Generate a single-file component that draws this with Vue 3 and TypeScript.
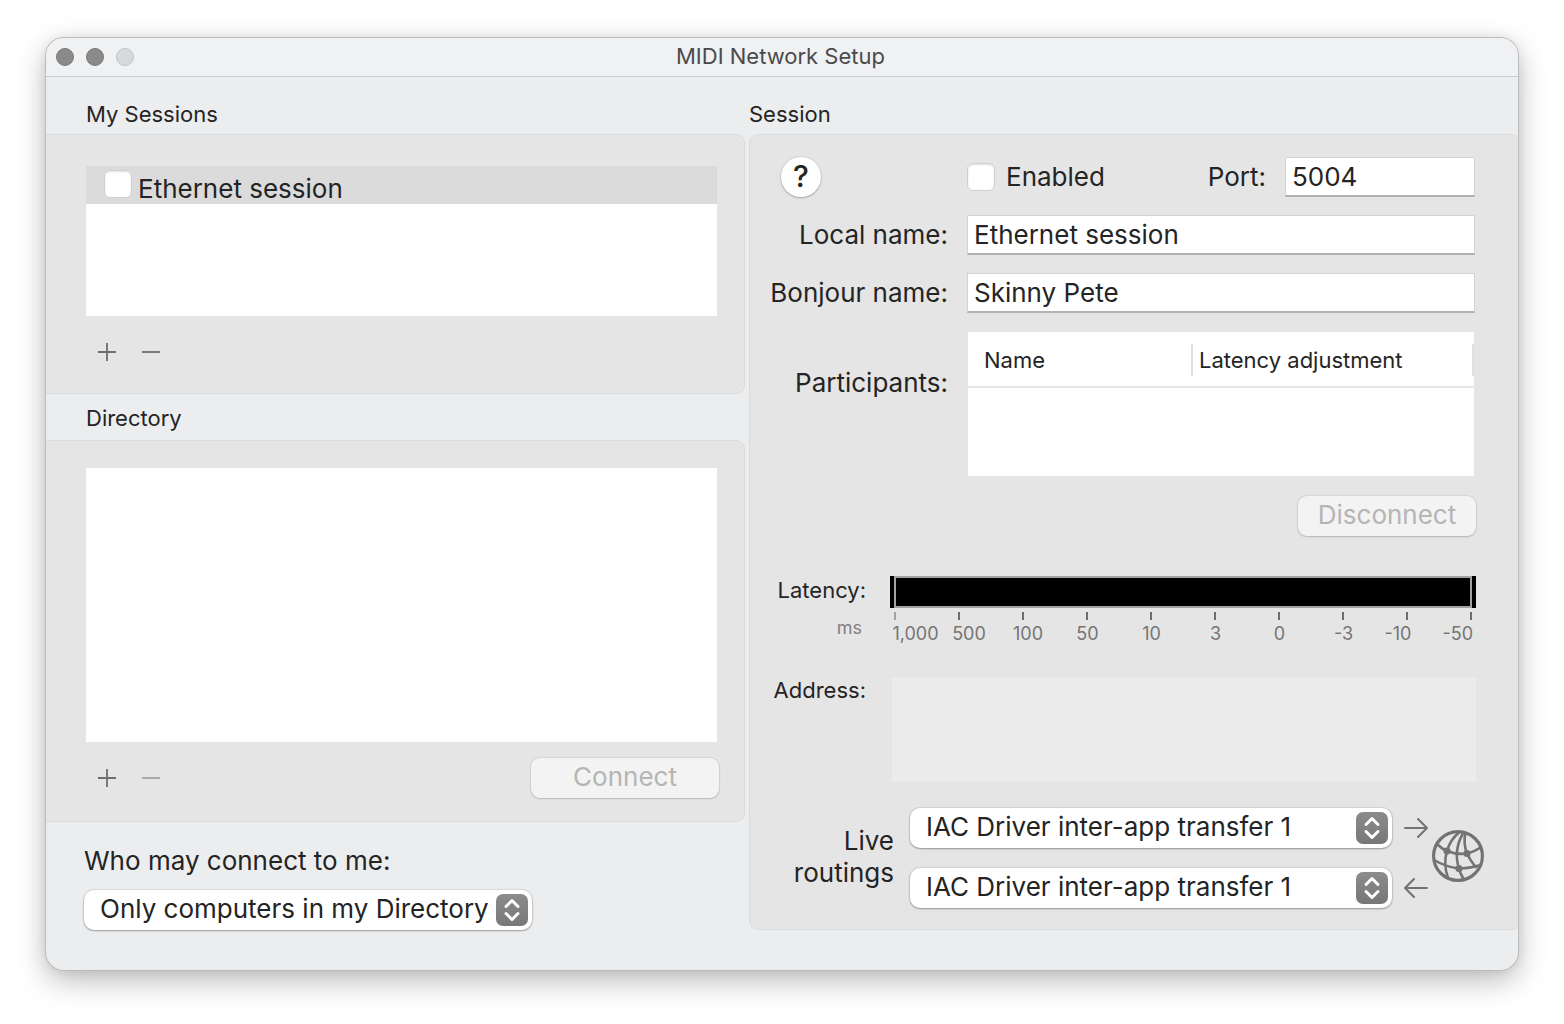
<script setup lang="ts">
import { ref } from 'vue'

interface Session {
  id: number
  name: string
  enabled: boolean
}

const sessions = ref<Session[]>([{ id: 1, name: 'Ethernet session', enabled: false }])
const enabled = ref(false)
const port = ref('5004')
const localName = ref('Ethernet session')
const bonjourName = ref('Skinny Pete')
const access = ref('Only computers in my Directory')
const driver = 'IAC Driver inter-app transfer 1'
const routeOut = ref(driver)
const routeIn = ref(driver)
const scale: string[] = ['1,000', '500', '100', '50', '10', '3', '0', '-3', '-10', '-50']
</script>

<template>
  <div class="desktop">
    <main class="window">
      <header class="titlebar">
        <div class="lights">
          <button class="light" type="button" aria-label="Close"></button>
          <button class="light" type="button" aria-label="Minimize"></button>
          <button class="light off" type="button" aria-label="Zoom" disabled></button>
        </div>
        <h1>MIDI Network Setup</h1>
      </header>

      <div class="body">
        <div class="column">
          <h2 class="first">My Sessions</h2>
          <section class="panel left sessions">
            <ul class="list">
              <li v-for="s in sessions" :key="s.id">
                <label><input v-model="s.enabled" type="checkbox" class="check" /><span>{{ s.name }}</span></label>
              </li>
            </ul>
            <div class="tools">
              <button class="tool" type="button" aria-label="Add session">
                <svg viewBox="0 0 20 20"><path d="M1 10H19M10 1V19" /></svg>
              </button>
              <button class="tool" type="button" aria-label="Remove session">
                <svg viewBox="0 0 20 20"><path d="M1 10H19" /></svg>
              </button>
            </div>
          </section>

          <h2>Directory</h2>
          <section class="panel left directory">
            <ul class="list"></ul>
            <div class="tools">
              <button class="tool" type="button" aria-label="Add computer">
                <svg viewBox="0 0 20 20"><path d="M1 10H19M10 1V19" /></svg>
              </button>
              <button class="tool" type="button" aria-label="Remove computer" disabled>
                <svg viewBox="0 0 20 20"><path d="M1 10H19" /></svg>
              </button>
              <button class="push connect" type="button" disabled>Connect</button>
            </div>
          </section>

          <div class="access">
            <label for="access">Who may connect to me:</label>
            <span class="popup">
              <select id="access" v-model="access">
                <option>Only computers in my Directory</option>
              </select>
              <svg class="knob" viewBox="0 0 32 32"><path d="M10 12.500L16 6.500L22 12.500M10 19.500L16 25.500L22 19.500" /></svg>
            </span>
          </div>
        </div>

        <div class="column">
          <h2 class="first session-title">Session</h2>
          <section class="panel right">
            <div class="row">
              <div class="caption help-cell">
                <button class="help" type="button" aria-label="Help">?</button>
              </div>
              <div class="field split">
                <label class="enable"><input v-model="enabled" type="checkbox" class="check" /><span>Enabled</span></label>
                <label for="port" class="port-label">Port:</label>
                <input id="port" v-model="port" class="text port" type="text" />
              </div>
            </div>
            <div class="row">
              <label class="caption" for="local">Local name:</label>
              <input id="local" v-model="localName" class="text field" type="text" />
            </div>
            <div class="row">
              <label class="caption" for="bonjour">Bonjour name:</label>
              <input id="bonjour" v-model="bonjourName" class="text field" type="text" />
            </div>
            <div class="row top">
              <span id="participants" class="caption participants">Participants:</span>
              <div class="field table-box">
                <table aria-labelledby="participants">
                  <thead>
                    <tr>
                      <th><span>Name</span></th>
                      <th><span>Latency adjustment</span></th>
                    </tr>
                  </thead>
                </table>
              </div>
            </div>
            <button class="push disconnect" type="button" disabled>Disconnect</button>

            <div class="meter-row">
              <div class="meter-captions">
                <span>Latency:</span>
                <small>ms</small>
              </div>
              <div class="meter">
                <div class="bar"><div></div></div>
                <div class="ticks"><i v-for="n in scale" :key="n"></i></div>
                <div class="scale"><span v-for="n in scale" :key="n">{{ n }}</span></div>
              </div>
            </div>

            <div class="meter-row address">
              <label class="meter-captions" for="address">Address:</label>
              <output id="address"></output>
            </div>

            <div class="routing">
              <span class="routing-label">Live routings</span>
              <div class="routes">
                <div class="route">
                  <span class="popup">
                    <select v-model="routeOut" aria-label="Live routing to network">
                      <option>{{ driver }}</option>
                    </select>
                    <svg class="knob" viewBox="0 0 32 32"><path d="M10 12.500L16 6.500L22 12.500M10 19.500L16 25.500L22 19.500" /></svg>
                  </span>
                  <svg class="arrow" viewBox="0 0 24 20"><path d="M1 10H23M14 1L23 10L14 19" /></svg>
                </div>
                <div class="route">
                  <span class="popup">
                    <select v-model="routeIn" aria-label="Live routing from network">
                      <option>{{ driver }}</option>
                    </select>
                    <svg class="knob" viewBox="0 0 32 32"><path d="M10 12.500L16 6.500L22 12.500M10 19.500L16 25.500L22 19.500" /></svg>
                  </span>
                  <svg class="arrow" viewBox="0 0 24 20"><path d="M23 10H1M10 1L1 10L10 19" /></svg>
                </div>
              </div>
              <svg class="globe" viewBox="0 0 52 52">
                <g fill="none" stroke="#737373" stroke-width="2.600">
                  <circle cx="26" cy="26" r="24.400" stroke-width="3.200" />
                  <path d="M5.500 14.500Q10 19 15 21Q25 25 35 23.500Q42 22 48.500 17.500" />
                  <path d="M2 30Q14 37 27 38.500Q40 38 48.500 35" />
                  <path d="M27 2.500Q18 10 15 21Q11 34 16 48" />
                  <path d="M31.500 2.500Q21 20 27 38.500Q28 43 31.500 49" />
                  <path d="M33.500 2.500Q31 13 35 23.500Q38 30 44.500 38" />
                </g>
                <g fill="#737373">
                  <circle cx="15" cy="21" r="3.600" />
                  <circle cx="35" cy="23.500" r="3.600" />
                  <circle cx="27" cy="38.500" r="3.600" />
                </g>
              </svg>
            </div>
          </section>
        </div>
      </div>
    </main>
  </div>
</template>

<style>
body {
  background: #fff;
}
</style>

<style scoped>
* {
  box-sizing: border-box;
}
.desktop {
  padding: 38px 46px 54px;
  font-family: Inter, "Liberation Sans", sans-serif;
  font-size: 26px;
  line-height: 32px;
  color: #242424;
}
button,
input,
select {
  font: inherit;
  color: inherit;
  margin: 0;
  padding: 0;
  border: 0;
}
.window {
  border-radius: 18px;
  background: #ecedef;
  overflow: hidden;
  box-shadow: 0 0 0 1px #bcbcbc, 0 10px 30px rgba(0, 0, 0, 0.28), 0 0 12px rgba(0, 0, 0, 0.08);
}
.titlebar {
  display: grid;
  grid-template-columns: 1fr auto 1fr;
  align-items: center;
  height: 39px;
  background: #f0f1f3;
  border-bottom: 1px solid #c8c9cb;
}
.lights {
  display: flex;
  gap: 12px;
  padding-left: 10px;
}
.light {
  width: 18px;
  height: 18px;
  border-radius: 50%;
  background: #8a8a8b;
  border: 1px solid #79797a;
}
.light.off {
  background: #d8d9da;
  border-color: #c1c2c3;
}
h1,
h2 {
  margin: 0;
  font-weight: 400;
  font-size: 22px;
  line-height: 26px;
}
h1 {
  padding: 0 3px 2px 0;
  color: #4a4a4b;
}
.body {
  display: grid;
  grid-template-columns: 699fr 769fr;
  column-gap: 4px;
  padding-bottom: 40px;
}
h2 {
  padding: 11px 0 9px 40px;
}
h2.first {
  padding: 24px 0 7px 40px;
}
h2.session-title {
  padding-left: 0;
}
.panel {
  background: #e5e5e5;
  border: 1px solid #d9dbdd;
}
.left {
  border-left: 0;
  border-radius: 0 9px 9px 0;
  padding: 31px 25px 21px 40px;
}
.directory {
  padding-top: 27px;
  padding-bottom: 23px;
}
.list {
  list-style: none;
  margin: 0 2px 0 0;
  padding: 0;
  background: #fff;
  height: 150px;
}
.directory .list {
  height: 274px;
}
.list li {
  height: 38px;
  background: #dbdbdb;
}
.list label {
  display: flex;
  gap: 6px;
  padding: 4px 0 0 18px;
}
.list span {
  padding-top: 3px;
}
.check {
  appearance: none;
  flex: none;
  width: 28px;
  height: 28px;
  border-radius: 6px;
  background: #fff;
  border: 1px solid #cfcfcf;
  box-shadow: inset 0 1px 2px rgba(0, 0, 0, 0.12);
}
.tools {
  display: flex;
  align-items: center;
  gap: 24px;
  height: 40px;
  margin-top: 16px;
  padding-left: 11px;
}
.tool {
  width: 20px;
  height: 20px;
  background: none;
}
.tool svg {
  display: block;
  width: 20px;
  height: 20px;
  fill: none;
  stroke: #6e6e6e;
  stroke-width: 1.800;
}
.tool:disabled svg {
  stroke: #aaa;
}
.push {
  height: 40px;
  padding-bottom: 2px;
  border-radius: 9px;
  background: #f3f3f3;
  color: #b5b5b5;
  box-shadow: 0 0 1px 1px rgba(0, 0, 0, 0.06), 0 1px 2px rgba(0, 0, 0, 0.16);
}
.connect {
  width: 188px;
  margin-left: auto;
}
.access {
  display: flex;
  flex-direction: column;
  align-items: flex-start;
  gap: 13px;
  padding: 23px 0 0 38px;
}
.popup {
  position: relative;
  display: flex;
}
.access .popup {
  width: 448px;
}
select {
  appearance: none;
  width: 100%;
  height: 40px;
  padding: 0 40px 2px 16px;
  border-radius: 10px;
  background: #fff;
  box-shadow: 0 0 1px 1px rgba(0, 0, 0, 0.08), 0 1px 2px rgba(0, 0, 0, 0.3);
}
.knob {
  position: absolute;
  right: 4px;
  top: 4px;
  width: 32px;
  height: 32px;
  border-radius: 7px;
  background: linear-gradient(#8c8c8c, #777);
  fill: none;
  stroke: #fff;
  stroke-width: 3;
  stroke-linecap: round;
  stroke-linejoin: round;
  pointer-events: none;
}
.right {
  display: flex;
  flex-direction: column;
  border-right: 0;
  border-radius: 9px 6px 6px 9px;
  padding: 22px 34px 21px 16px;
}
.row {
  display: flex;
  align-items: center;
  gap: 19px;
  margin: 0 9px 18px 0;
}
.caption {
  flex: none;
  width: 182px;
  text-align: right;
}
.field {
  flex: 1;
  min-width: 0;
}
.help-cell {
  display: flex;
  padding-left: 15px;
}
.help {
  width: 40px;
  height: 40px;
  padding-bottom: 2px;
  border-radius: 50%;
  background: #fff;
  font-size: 30px;
  font-weight: 500;
  box-shadow: 0 0 1px 1px rgba(0, 0, 0, 0.06), 0 1px 2px rgba(0, 0, 0, 0.25);
}
.split {
  display: flex;
  align-items: center;
}
.enable {
  display: flex;
  align-items: center;
  gap: 11px;
}
.port-label {
  margin-left: auto;
  margin-right: 19px;
}
.text {
  height: 40px;
  padding: 0 6px;
  background: #fff;
  border: 1px solid #d2d2d2;
  border-bottom: 2px solid #b2b2b2;
}
.port {
  width: 190px;
}
.row.top {
  align-items: flex-start;
  margin-top: 1px;
  margin-bottom: 20px;
}
.participants {
  padding-top: 35px;
}
.table-box {
  height: 144px;
  margin: 0 1px;
  background: #fff;
}
table {
  width: 100%;
  table-layout: fixed;
  border-collapse: collapse;
  border-bottom: 2px solid #e5e5e5;
}
th {
  padding: 12px 0 10px;
  font-size: 22px;
  font-weight: 400;
  text-align: left;
}
th:first-child {
  width: 225px;
}
th span {
  display: block;
  border-right: 2px solid #e0e0e0;
  padding-left: 6px;
}
th:first-child span {
  padding-left: 16px;
}
.disconnect {
  width: 178px;
  align-self: flex-end;
  margin-right: 8px;
}
.meter-row {
  display: flex;
  gap: 24px;
  margin: 40px 8px 0 0;
  font-size: 22px;
  line-height: 28px;
}
.meter-captions {
  flex: none;
  width: 100px;
  text-align: right;
}
.meter-captions span,
.meter-captions small {
  display: block;
}
.meter-captions small {
  font-size: 18px;
  line-height: 24px;
  padding: 12px 4px 0 0;
  color: #808080;
}
.meter {
  flex: 1;
}
.bar {
  height: 32px;
  padding: 0 4px;
  background: #000;
}
.bar div {
  height: 32px;
  border: 2px solid #a3a3a3;
}
.ticks {
  display: flex;
  justify-content: space-between;
  padding: 4px 4px 0;
}
.ticks i {
  width: 2px;
  height: 8px;
  background: #6c6c6c;
}
.ticks i:first-child {
  background: #a3a3a3;
}
.scale {
  display: grid;
  grid-template-columns: 51fr 56fr 62fr 57fr 71fr 57fr 71fr 57fr 52fr 52fr;
  font-size: 18px;
  line-height: 28px;
  color: #757575;
  text-align: center;
}
.scale span:last-child {
  padding-right: 3px;
  text-align: right;
}
.address {
  margin-top: 30px;
  gap: 26px;
  line-height: 24px;
}
output {
  flex: 1;
  height: 104px;
  background: #ebebeb;
}
.routing {
  display: flex;
  align-items: center;
  margin-top: 26px;
}
.routing-label {
  width: 128px;
  padding: 0 0 2px 20px;
  text-align: right;
}
.routes {
  flex: 1;
  display: grid;
  gap: 20px;
  margin: 0 4px 0 16px;
}
.route {
  display: flex;
  align-items: center;
  gap: 12px;
}
.route .popup {
  flex: 1;
}
.arrow {
  width: 24px;
  height: 20px;
  fill: none;
  stroke: #737373;
  stroke-width: 2;
  stroke-linecap: round;
  stroke-linejoin: round;
}
.globe {
  width: 52px;
  height: 52px;
  margin-bottom: 4px;
}
</style>
